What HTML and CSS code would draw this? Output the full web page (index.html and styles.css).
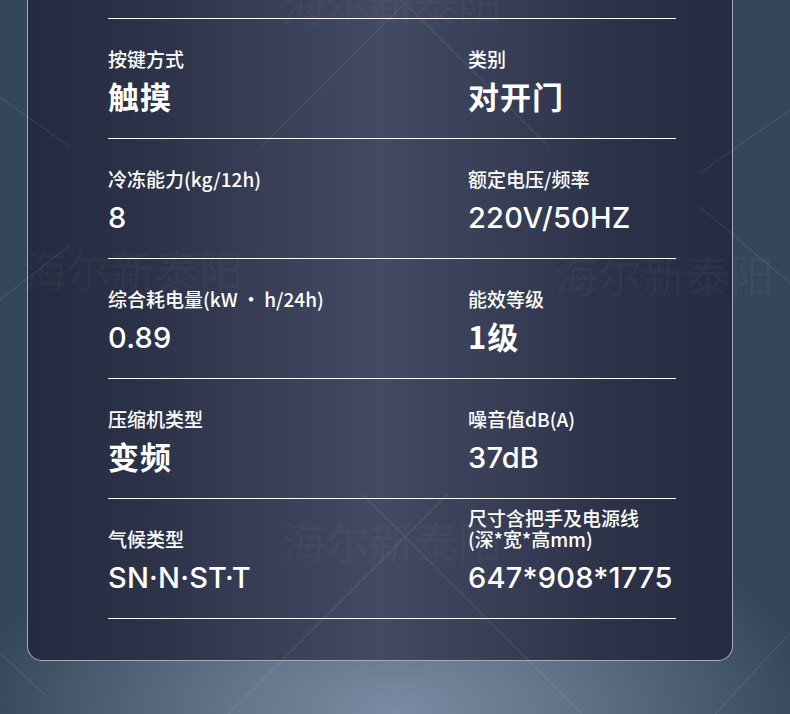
FILE: index.html
```html
<!DOCTYPE html>
<html>
<head>
    <title>产品参数</title>
    <meta charset="UTF-8">
    <link rel="stylesheet" href="styles.css">
</head>
<body>
<div class="page">
    <svg class="deco" width="790" height="714" viewBox="0 0 790 714">
        <line x1="405" y1="3" x2="262" y2="146" />
        <line x1="405" y1="3" x2="548" y2="146" />
        <line x1="405" y1="537" x2="220" y2="722" />
        <line x1="405" y1="537" x2="590" y2="722" />
        <line x1="405" y1="537" x2="362" y2="494" />
        <line x1="405" y1="537" x2="448" y2="494" />
        <line x1="0" y1="97" x2="70" y2="147" />
        <line x1="0" y1="300" x2="70" y2="245" />
        <line x1="0" y1="653" x2="45" y2="695" />
        <line x1="790" y1="110" x2="700" y2="173" />
        <line x1="700" y1="207" x2="790" y2="283" />
        <line x1="790" y1="633" x2="715" y2="714" />
    </svg>

    <div class="card">
        <div class="specs">
            <div class="row">
                <div class="cell">
                    <div class="label">按键方式</div>
                    <div class="value cn">触摸</div>
                </div>
                <div class="cell">
                    <div class="label">类别</div>
                    <div class="value cn">对开门</div>
                </div>
            </div>
            <div class="row">
                <div class="cell">
                    <div class="label">冷冻能力(kg/12h)</div>
                    <div class="value">8</div>
                </div>
                <div class="cell">
                    <div class="label">额定电压/频率</div>
                    <div class="value">220V/50HZ</div>
                </div>
            </div>
            <div class="row">
                <div class="cell">
                    <div class="label">综合耗电量(kW&thinsp;·&thinsp;h/24h)</div>
                    <div class="value">0.89</div>
                </div>
                <div class="cell">
                    <div class="label">能效等级</div>
                    <div class="value cn">1级</div>
                </div>
            </div>
            <div class="row">
                <div class="cell">
                    <div class="label">压缩机类型</div>
                    <div class="value cn">变频</div>
                </div>
                <div class="cell">
                    <div class="label">噪音值dB(A)</div>
                    <div class="value">37dB</div>
                </div>
            </div>
            <div class="row">
                <div class="cell">
                    <div class="label">气候类型</div>
                    <div class="value">SN·N·ST·T</div>
                </div>
                <div class="cell">
                    <div class="label">尺寸含把手及电源线<br>(深*宽*高mm)</div>
                    <div class="value">647*908*1775</div>
                </div>
            </div>
        </div>
    </div>

    <!-- 水印 -->
    <span class="mark mark-top">海尔新泰阳</span>
    <span class="mark mark-left">海尔新泰阳</span>
    <span class="mark mark-right">海尔新泰阳</span>
    <span class="mark mark-mid">海尔新泰阳</span>
</div>
</body>
</html>
```

FILE: styles.css
```css
body { margin: 0; background: #34475a; font-family: "Noto Sans CJK SC", sans-serif; color: #fff; }
.page {
    position: relative; width: 790px; height: 714px; overflow: hidden;
    background: radial-gradient(ellipse 420px 230px at 50% 100%, #7a8ca3 0%, #62748a 40%, #34475a 100%);
}
.deco { position: absolute; left: 0; top: 0; pointer-events: none; z-index: 2; }
.deco line { stroke: rgba(255, 255, 255, 0.07); stroke-width: 1.5; }

.card {
    margin-left: 27px; width: 706px; height: 661px; box-sizing: border-box;
    padding: 18px 0 0 80px;
    border: 1.5px solid #a4abb9; border-top: none; border-radius: 0 0 15px 15px;
    background: linear-gradient(90deg, #242a3f 0%, #2c3349 18%, #434a64 50%, #2c3349 82%, #252b41 100%);
}
.specs { width: 568px; border-top: 1px solid #fff; }
.row {
    display: grid; grid-template-columns: 360px 1fr; align-items: end;
    height: 120px; box-sizing: border-box; padding-bottom: 27px;
    border-bottom: 1px solid #fff;
}
.label { font-size: 19px; line-height: 21px; font-weight: 500; margin-bottom: 12px; }
.value {
    font-family: Inter, "Noto Sans CJK SC", sans-serif; font-size: 29px; line-height: 30px; font-weight: 500;
    letter-spacing: 0.2px; padding-top: 2px; margin-bottom: -2px;
}
.value.cn {
    font-family: "Noto Sans CJK SC", sans-serif; font-size: 31px; font-weight: 700;
    letter-spacing: 1px; padding-top: 0; margin-bottom: 0;
}

.mark { position: absolute; font-size: 44px; line-height: 46px; color: rgba(255, 255, 255, 0.045); z-index: 1; white-space: nowrap; }
.mark-top { left: 282px; top: -20px; }
.mark-left { left: 23px; top: 246px; }
.mark-right { left: 554px; top: 251px; }
.mark-mid { left: 282px; top: 518px; }
```
